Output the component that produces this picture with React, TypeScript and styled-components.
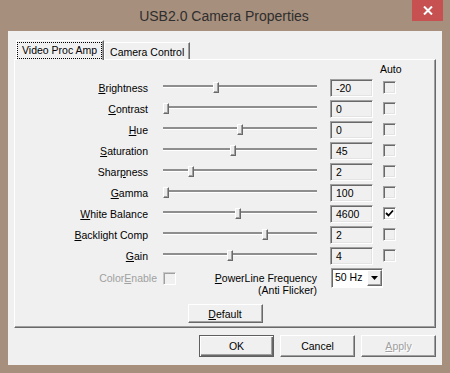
import React from "react";
import styled, { createGlobalStyle, css } from "styled-components";

const GlobalStyle = createGlobalStyle`
  html, body {
    margin: 0;
    padding: 0;
    background: #a68f7c;
  }
  body {
    font-family: "Liberation Sans", Arial, sans-serif;
  }
`;

const raised = css`
  border: 1px solid;
  border-color: #ffffff #696969 #696969 #ffffff;
  box-shadow: inset -1px -1px 0 #a0a0a0;
`;

const sunken = css`
  border: 1px solid;
  border-color: #a0a0a0 #ffffff #ffffff #a0a0a0;
  box-shadow: inset 1px 1px 0 #696969, inset -1px -1px 0 #e3e3e3;
`;

const Window = styled.div`
  width: 450px;
  height: 373px;
  background: #a68f7c;
  display: flex;
  flex-direction: column;
`;

const TitleBar = styled.div`
  height: 31px;
  display: flex;
  align-items: flex-start;
`;

const Title = styled.div`
  flex: 1;
  padding-left: 36px;
  text-align: center;
  line-height: 32px;
  font-size: 14px;
  color: #2e2e2e;
`;

const CloseButton = styled.div`
  width: 31px;
  height: 21px;
  margin-right: 7px;
  background: #c75050;
  display: flex;
  align-items: center;
  justify-content: center;
`;

const Client = styled.div`
  flex: 1;
  margin: 0 8px 8px;
  padding: 9px 6px 0;
  background: #f0f0f0;
  display: flex;
  flex-direction: column;
  font-size: 10.5px;
  color: #000;
`;

const TabStrip = styled.div`
  height: 19px;
  display: flex;
  align-items: flex-end;
  padding-left: 2px;
`;

const Tab = styled.div<{ $active?: boolean }>`
  position: relative;
  box-sizing: border-box;
  display: flex;
  align-items: center;
  background: #f0f0f0;
  border: 1px solid;
  border-bottom: none;
  border-color: #ffffff #696969 #696969 #ffffff;
  box-shadow: inset -1px 0 0 #a0a0a0;
  white-space: nowrap;
  ${(p) =>
    p.$active
      ? css`
          height: 20px;
          margin-bottom: -1px;
          z-index: 1;
          padding: 1px 1px 2px 0;
        `
      : css`
          height: 17px;
          padding: 1px 5px 0 5px;
        `}
`;

const FocusRect = styled.span`
  border: 1px dotted #000;
  padding: 1px 4px 1px 4px;
  line-height: 13px;
`;

const TabPage = styled.div`
  box-sizing: border-box;
  height: 269px;
  border: 1px solid;
  border-color: #ffffff #696969 #696969 #ffffff;
  box-shadow: inset -1px -1px 0 #a0a0a0;
  display: flex;
  flex-direction: column;
`;

const HeaderRow = styled.div`
  height: 17px;
  display: flex;
  align-items: center;
  padding-left: 365px;
`;

const Row = styled.div`
  height: 21px;
  display: flex;
  align-items: center;
`;

const Label = styled.div<{ $width?: number; $disabled?: boolean }>`
  width: ${(p) => p.$width ?? 133}px;
  text-align: right;
  white-space: nowrap;
  color: ${(p) => (p.$disabled ? "#a0a0a0" : "#000")};
`;

const Key = styled.span`
  text-decoration: underline;
`;

const Slider = styled.div`
  position: relative;
  width: 154px;
  height: 11px;
  margin-left: 15px;
`;

const Track = styled.div`
  margin-top: 3px;
  height: 2px;
  background: #8e8e8e;
  border-bottom: 1px solid #ffffff;
`;

const Thumb = styled.div`
  position: absolute;
  top: 0;
  box-sizing: border-box;
  width: 6px;
  height: 11px;
  background: #ececec;
  ${raised};
`;

const Edit = styled.div`
  box-sizing: border-box;
  width: 43px;
  height: 18px;
  margin-left: 13px;
  padding-left: 5px;
  line-height: 16px;
  background: #f0f0f0;
  ${sunken};
`;

const Check = styled.div<{ $on?: boolean; $gap?: number; $disabled?: boolean }>`
  box-sizing: border-box;
  width: 13px;
  height: 13px;
  margin-left: ${(p) => p.$gap ?? 10}px;
  background: ${(p) => (p.$on ? "#ffffff" : "#f0f0f0")};
  display: flex;
  align-items: center;
  justify-content: center;
  ${sunken};
  ${(p) =>
    p.$disabled &&
    css`
      border-color: #c8c8c8 #ffffff #ffffff #c8c8c8;
      box-shadow: inset 1px 1px 0 #a0a0a0;
    `}
`;

const OptionRow = styled.div`
  display: flex;
  align-items: flex-start;
  margin-top: 2px;
`;

const PowerLabel = styled.div`
  width: 141px;
  margin-top: 4px;
  text-align: right;
  line-height: 12px;
`;

const Combo = styled.div`
  box-sizing: border-box;
  width: 52px;
  height: 20px;
  margin-left: 14px;
  background: #ffffff;
  display: flex;
  align-items: stretch;
  ${sunken};
  box-shadow: inset 1px 1px 0 #696969;
`;

const ComboText = styled.div`
  flex: 1;
  padding-left: 3px;
  line-height: 17px;
`;

const DropButton = styled.div`
  box-sizing: border-box;
  width: 15px;
  margin: 1px 0 1px;
  background: #f0f0f0;
  display: flex;
  align-items: center;
  justify-content: center;
  ${raised};
`;

const DefaultBar = styled.div`
  margin-top: auto;
  padding-bottom: 4px;
  display: flex;
  justify-content: center;
`;

const Button = styled.div<{ $primary?: boolean; $disabled?: boolean; $height?: number }>`
  box-sizing: border-box;
  width: 75px;
  height: ${(p) => p.$height ?? 22}px;
  display: flex;
  align-items: center;
  justify-content: center;
  background: #f0f0f0;
  color: ${(p) => (p.$disabled ? "#a0a0a0" : "#000")};
  text-shadow: ${(p) => (p.$disabled ? "1px 1px 0 #ffffff" : "none")};
  ${raised};
  ${(p) =>
    p.$primary &&
    css`
      border: 1px solid #5f5f5f;
      box-shadow: inset 1px 1px 0 #ffffff, inset -1px -1px 0 #696969, inset -2px -2px 0 #a0a0a0;
    `}
`;

const Footer = styled.div`
  display: flex;
  justify-content: flex-end;
  gap: 6px;
  padding: 7px 0 8px;
`;

type Setting = { name: string; key: number; value: string; pos: number; auto?: boolean };

const settings: Setting[] = [
  { name: "Brightness", key: 0, value: "-20", pos: 0.34 },
  { name: "Contrast", key: 0, value: "0", pos: 0 },
  { name: "Hue", key: 0, value: "0", pos: 0.5 },
  { name: "Saturation", key: 0, value: "45", pos: 0.45 },
  { name: "Sharpness", key: 4, value: "2", pos: 0.167 },
  { name: "Gamma", key: 0, value: "100", pos: 0 },
  { name: "White Balance", key: 0, value: "4600", pos: 0.486, auto: true },
  { name: "Backlight Comp", key: 0, value: "2", pos: 0.667 },
  { name: "Gain", key: 0, value: "4", pos: 0.43 },
];

const Mnemonic = ({ text, at }: { text: string; at: number }) => (
  <>
    {text.slice(0, at)}
    <Key>{text[at]}</Key>
    {text.slice(at + 1)}
  </>
);

const CheckMark = () => (
  <svg width="9" height="9" viewBox="0 0 9 9">
    <path d="M1 4 L3.5 6.5 L8 1.5" fill="none" stroke="#000" strokeWidth="1.8" />
  </svg>
);

export default function App() {
  return (
    <Window>
      <GlobalStyle />
      <TitleBar>
        <Title>USB2.0 Camera Properties</Title>
        <CloseButton>
          <svg width="10" height="9" viewBox="0 0 10 9">
            <path d="M1 0.5 L9 8.5 M9 0.5 L1 8.5" stroke="#fff" strokeWidth="2" />
          </svg>
        </CloseButton>
      </TitleBar>
      <Client>
        <TabStrip>
          <Tab $active>
            <FocusRect>Video Proc Amp</FocusRect>
          </Tab>
          <Tab>Camera Control</Tab>
        </TabStrip>
        <TabPage>
          <HeaderRow>Auto</HeaderRow>
          {settings.map((s) => (
            <Row key={s.name}>
              <Label>
                <Mnemonic text={s.name} at={s.key} />
              </Label>
              <Slider>
                <Track />
                <Thumb style={{ left: Math.round(s.pos * 148) }} />
              </Slider>
              <Edit>{s.value}</Edit>
              <Check $on={s.auto}>{s.auto && <CheckMark />}</Check>
            </Row>
          ))}
          <OptionRow>
            <Label $width={142} $disabled style={{ lineHeight: "20px" }}>
              Color<Key>E</Key>nable
            </Label>
            <Check $gap={6} $disabled style={{ marginTop: 4 }} />
            <PowerLabel>
              <Key>P</Key>owerLine Frequency
              <br />
              (Anti Flicker)
            </PowerLabel>
            <Combo>
              <ComboText>50 Hz</ComboText>
              <DropButton>
                <svg width="7" height="4" viewBox="0 0 7 4">
                  <path d="M0 0 H7 L3.5 4 Z" fill="#000" />
                </svg>
              </DropButton>
            </Combo>
          </OptionRow>
          <DefaultBar>
            <Button $height={19}>
              <Key>D</Key>efault
            </Button>
          </DefaultBar>
        </TabPage>
        <Footer>
          <Button $primary>OK</Button>
          <Button>Cancel</Button>
          <Button $disabled>
            <Key>A</Key>pply
          </Button>
        </Footer>
      </Client>
    </Window>
  );
}
